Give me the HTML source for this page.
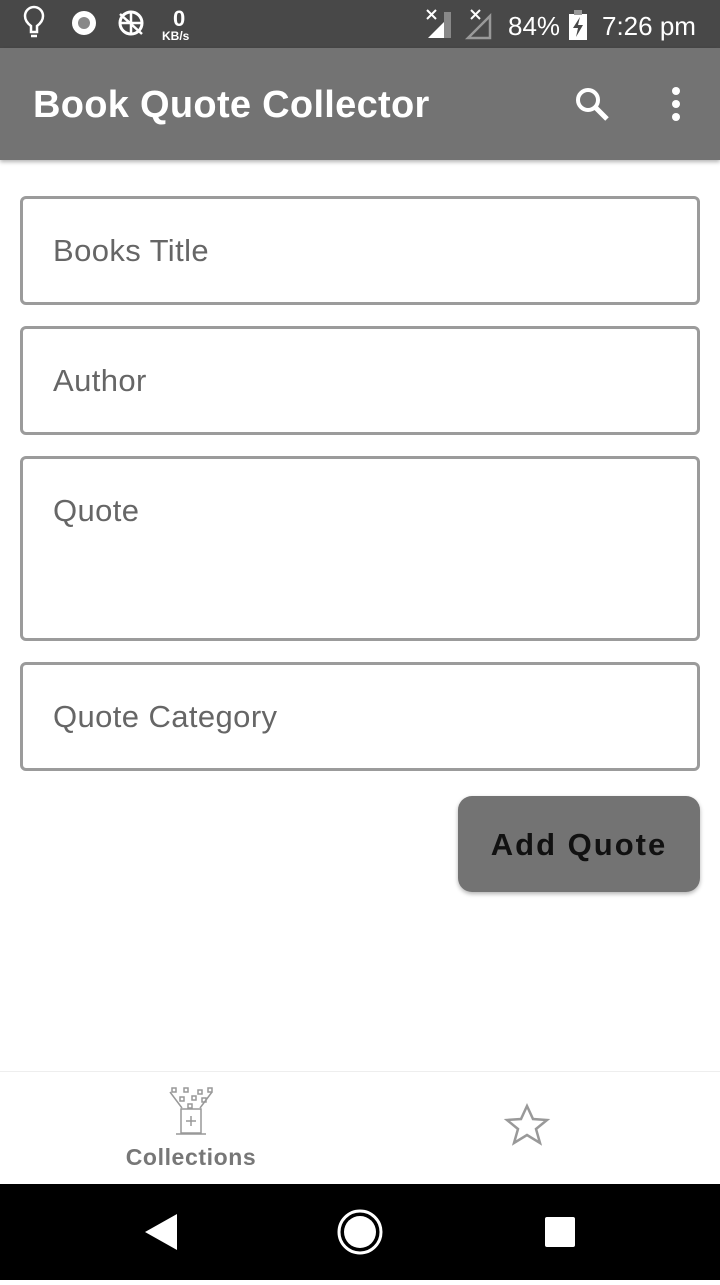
<!DOCTYPE html>
<html><head><meta charset="utf-8"><style>
*{margin:0;padding:0;box-sizing:border-box}
body{width:720px;height:1280px;background:#fff;font-family:"Liberation Sans",sans-serif;position:relative;overflow:hidden}
.sb{position:absolute;top:0;left:0;width:720px;height:48px;background:#484848;color:#fff}
.ab{position:absolute;top:48px;left:0;width:720px;height:112px;background:#737373;box-shadow:0 2px 4px rgba(0,0,0,.3)}
.ab h1{position:absolute;left:33px;top:36px;font-size:38px;font-weight:bold;color:#fff;letter-spacing:.3px}
.f{position:absolute;left:20px;width:680px;border:3px solid #9b9b9b;border-radius:6px;font-size:31px;letter-spacing:.4px;color:#666;padding-left:30px}
.btn{position:absolute;left:458px;top:796px;width:242px;height:96px;background:#737373;border-radius:14px;box-shadow:0 2px 4px rgba(0,0,0,.3);font-size:31px;font-weight:bold;color:#111;letter-spacing:2px;text-align:center;line-height:98px}
.bn{position:absolute;top:1071px;left:0;width:720px;height:113px;border-top:1px solid #eee;background:#fff}
.nav{position:absolute;top:1184px;left:0;width:720px;height:96px;background:#000}
</style></head><body>
<div class="sb">
<svg width="720" height="48" style="position:absolute;left:0;top:0">
<g fill="none" stroke="#fff" stroke-width="2.5"><path d="M31 32v-6c-4-3-6-6-6-10a9 9 0 0 1 18 0c0 4-2 7-6 10v6z"/><path d="M31 36h6"/></g>
<circle cx="84" cy="23" r="12" fill="#fff"/><circle cx="84" cy="23" r="6" fill="#888"/>
<circle cx="131" cy="23" r="11" fill="none" stroke="#fff" stroke-width="3"/><path d="M120 14l22 20M131 12v22M120 23h22" stroke="#fff" stroke-width="2.5"/>
<text x="173" y="26" fill="#fff" font-size="22" font-weight="bold" font-family="Liberation Sans">0</text>
<text x="162" y="40" fill="#fff" font-size="12" font-weight="bold" font-family="Liberation Sans">KB/s</text>
<path d="M428 38l22-22v22z" fill="#fff"/><path d="M444 12v26h7V12z" fill="#888"/>
<path d="M427 10l9 9M436 10l-9 9M471 10l9 9M480 10l-9 9" stroke="#fff" stroke-width="2"/>
<path d="M468 38l22-22v22z" fill="none" stroke="#999" stroke-width="2.5"/>
<text x="508" y="35" fill="#fff" font-size="26" font-family="Liberation Sans">84%</text>
<rect x="569" y="14" width="18" height="26" fill="#fff"/><rect x="574" y="10" width="8" height="5" fill="#999"/>
<path d="M580 17l-7 11h5l-2 9 7-12h-5z" fill="#484848"/>
<text x="602" y="35" fill="#fff" font-size="26" font-family="Liberation Sans">7:26 pm</text>
</svg></div>
<div class="ab"><h1>Book Quote Collector</h1>
<svg width="720" height="112" style="position:absolute;left:0;top:0">
<circle cx="588" cy="52" r="10" fill="none" stroke="#fff" stroke-width="4"/><path d="M595 59l12 12" stroke="#fff" stroke-width="5"/>
<circle cx="676" cy="43" r="4" fill="#fff"/><circle cx="676" cy="56" r="4" fill="#fff"/><circle cx="676" cy="69" r="4" fill="#fff"/>
</svg></div>
<div class="f" style="top:196px;height:109px;line-height:103px">Books Title</div>
<div class="f" style="top:326px;height:109px;line-height:103px">Author</div>
<div class="f" style="top:456px;height:185px;padding-top:34px">Quote</div>
<div class="f" style="top:662px;height:109px;line-height:103px">Quote Category</div>
<div class="btn">Add Quote</div>
<div class="bn">
<svg width="720" height="113" style="position:absolute;left:0;top:0">
<g fill="none" stroke="#999" stroke-width="1.5">
<rect x="181" y="37" width="20" height="24"/><path d="M176 62h30M191 44v10M186 49h10"/>
<path d="M170 20l12 16M212 20l-12 16"/>
<rect x="172" y="16" width="4" height="4"/><rect x="184" y="16" width="4" height="4"/><rect x="198" y="18" width="4" height="4"/><rect x="208" y="16" width="4" height="4"/>
<rect x="180" y="25" width="4" height="4"/><rect x="192" y="24" width="4" height="4"/><rect x="202" y="26" width="4" height="4"/><rect x="188" y="32" width="4" height="4"/>
<path d="M527 34l6 13 14 1-11 9 4 14-13-8-13 8 4-14-11-9 14-1z" stroke-width="2.5"/>
</g>
<text x="191" y="93" text-anchor="middle" fill="#777" font-size="23" font-weight="bold" letter-spacing="0.6" font-family="Liberation Sans">Collections</text>
</svg></div>
<div class="nav">
<svg width="720" height="96">
<path d="M145 48l32-18v36z" fill="#fff"/>
<circle cx="360" cy="48" r="21" fill="none" stroke="#fff" stroke-width="3"/><circle cx="360" cy="48" r="16" fill="#fff"/>
<rect x="545" y="33" width="30" height="30" rx="2" fill="#fff"/>
</svg></div>
</body></html>
